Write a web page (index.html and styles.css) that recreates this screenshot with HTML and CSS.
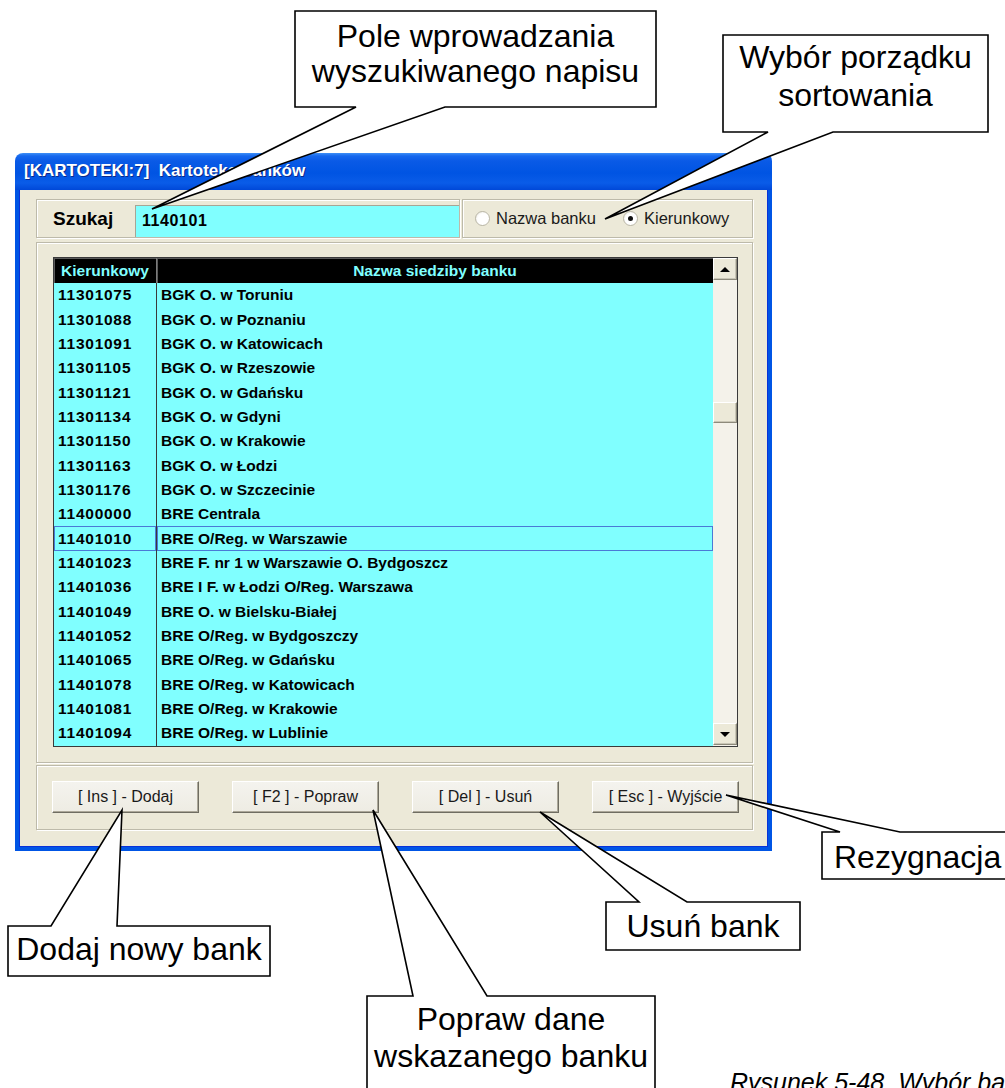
FILE: index.html
```html
<!DOCTYPE html>
<html lang="pl">
<head>
<meta charset="utf-8">
<title>Kartoteka banków</title>
<link rel="stylesheet" href="styles.css">
</head>
<body>
<div class="page">
  <div class="window">
    <div class="titlebar"><span class="title">[KARTOTEKI:7]&nbsp; Kartoteka banków</span></div>
    <div class="client">
      <div class="toprow">
        <div class="panel search">
          <span class="label">Szukaj</span>
          <div class="input">1140101</div>
        </div>
        <div class="panel sort">
          <div class="radio"><span class="rb"></span>Nazwa banku</div>
          <div class="radio"><span class="rb on"></span>Kierunkowy</div>
        </div>
      </div>
      <div class="panel main">
        <div class="grid">
          <div class="table">
            <div class="head">
              <div class="hc">Kierunkowy</div>
              <div class="hc">Nazwa siedziby banku</div>
            </div>
            <div class="row"><div class="c1">11301075</div><div class="c2">BGK O. w Toruniu</div></div>
            <div class="row"><div class="c1">11301088</div><div class="c2">BGK O. w Poznaniu</div></div>
            <div class="row"><div class="c1">11301091</div><div class="c2">BGK O. w Katowicach</div></div>
            <div class="row"><div class="c1">11301105</div><div class="c2">BGK O. w Rzeszowie</div></div>
            <div class="row"><div class="c1">11301121</div><div class="c2">BGK O. w Gdańsku</div></div>
            <div class="row"><div class="c1">11301134</div><div class="c2">BGK O. w Gdyni</div></div>
            <div class="row"><div class="c1">11301150</div><div class="c2">BGK O. w Krakowie</div></div>
            <div class="row"><div class="c1">11301163</div><div class="c2">BGK O. w Łodzi</div></div>
            <div class="row"><div class="c1">11301176</div><div class="c2">BGK O. w Szczecinie</div></div>
            <div class="row"><div class="c1">11400000</div><div class="c2">BRE Centrala</div></div>
            <div class="row sel"><div class="c1">11401010</div><div class="c2">BRE O/Reg. w Warszawie</div></div>
            <div class="row"><div class="c1">11401023</div><div class="c2">BRE F. nr 1 w Warszawie O. Bydgoszcz</div></div>
            <div class="row"><div class="c1">11401036</div><div class="c2">BRE I F. w Łodzi O/Reg. Warszawa</div></div>
            <div class="row"><div class="c1">11401049</div><div class="c2">BRE O. w Bielsku-Białej</div></div>
            <div class="row"><div class="c1">11401052</div><div class="c2">BRE O/Reg. w Bydgoszczy</div></div>
            <div class="row"><div class="c1">11401065</div><div class="c2">BRE O/Reg. w Gdańsku</div></div>
            <div class="row"><div class="c1">11401078</div><div class="c2">BRE O/Reg. w Katowicach</div></div>
            <div class="row"><div class="c1">11401081</div><div class="c2">BRE O/Reg. w Krakowie</div></div>
            <div class="row"><div class="c1">11401094</div><div class="c2">BRE O/Reg. w Lublinie</div></div>
          </div>
          <div class="scrollbar">
            <div class="sbtn"><span class="arr up"></span></div>
            <div class="thumb"></div>
            <div class="sbtn bottom"><span class="arr down"></span></div>
          </div>
        </div>
      </div>
      <div class="panel buttons">
        <div class="btn">[ Ins ] - Dodaj</div>
        <div class="btn">[ F2 ] - Popraw</div>
        <div class="btn">[ Del ] - Usuń</div>
        <div class="btn">[ Esc ] - Wyjście</div>
      </div>
    </div>
  </div>

  <svg class="overlay" width="1005" height="1088" viewBox="0 0 1005 1088">
    <g fill="#fff" stroke="#000" stroke-width="1.6" stroke-linejoin="miter">
      <polygon points="295,11 656,11 656,107 445,107 152,209 356,107 295,107"/>
      <polygon points="723,35 988,35 988,132 833,132 605,219 768,132 723,132"/>
      <polygon points="8,926 51,926 122,810 117,926 270,926 270,976 8,976"/>
      <polygon points="606,902 639,902 540,812 687,902 800,902 800,950 606,950"/>
      <polygon points="367,996 413,996 373,810 487,996 655,996 655,1100 367,1100"/>
      <polygon points="822,832 840,832 726,795 900,832 1012,832 1012,879 822,879"/>
    </g>
  </svg>

  <div class="callout c-pole">Pole wprowadzania<br>wyszukiwanego napisu</div>
  <div class="callout c-sort">Wybór porządku<br>sortowania</div>
  <div class="callout c-dodaj">Dodaj nowy bank</div>
  <div class="callout c-usun">Usuń bank</div>
  <div class="callout c-popraw">Popraw dane<br>wskazanego banku</div>
  <div class="callout c-rez">Rezygnacja</div>
  <div class="caption">Rysunek 5-48. Wybór banku</div>
</div>
</body>
</html>
```

FILE: styles.css
```css
html, body {
  margin: 0;
  padding: 0;
}
body {
  width: 1005px;
  height: 1088px;
  overflow: hidden;
  background: #fff;
  font-family: "Liberation Sans", Arial, sans-serif;
  color: #000;
}
.page {
  position: relative;
  width: 1005px;
  height: 1088px;
  padding: 153px 0 0 15px;
  box-sizing: border-box;
  overflow: hidden;
}

/* ---------- window ---------- */
.window {
  width: 757px;
}
.titlebar {
  height: 37px;
  box-sizing: border-box;
  border-radius: 8px 8px 0 0;
  background: linear-gradient(180deg, #3e8ff6 0px, #1668ee 3px, #0a5ae6 8px, #0054e3 20px, #0a5ce8 30px, #0048d8 37px);
  display: flex;
  align-items: center;
  padding: 0 0 2px 9px;
}
.title {
  color: #fff;
  font-weight: bold;
  font-size: 17px;
  text-shadow: 1px 1px 0 #0a2a8c;
}
.client {
  background: #ece9d8;
  border: 4px solid #0055e5;
  border-top: 0;
  padding: 9px 15px 19px 17px;
  height: 661px;
  box-sizing: border-box;
  box-shadow: inset 1px 0 0 #0831d9, inset -1px 0 0 #0831d9, inset 0 -1px 0 #0831d9;
}

.panel {
  border: 1px solid #bdbaaa;
  box-shadow: inset 1px 1px 0 #fff, 1px 1px 0 #fff;
  box-sizing: border-box;
}

/* ---------- top row ---------- */
.toprow {
  display: flex;
  gap: 2px;
  height: 39px;
}
.search {
  width: 424px;
  display: flex;
  align-items: flex-end;
  padding: 0 0 0 16px;
}
.search .label {
  font-weight: bold;
  font-size: 19px;
  align-self: center;
  width: 82px;
}
.input {
  margin-left: auto;
  width: 324px;
  height: 32px;
  box-sizing: border-box;
  background: #80ffff;
  border-top: 1px solid #a7a595;
  border-left: 1px solid #a7a595;
  font-weight: bold;
  font-size: 16px;
  line-height: 30px;
  padding-left: 6px;
  letter-spacing: 0.6px;
}
.sort {
  flex: 1;
  display: flex;
  align-items: center;
  padding-left: 12px;
  gap: 27px;
}
.radio {
  display: flex;
  align-items: center;
  gap: 6px;
  font-size: 16.5px;
  color: #1a1a1a;
}
.rb {
  width: 15px;
  height: 15px;
  box-sizing: border-box;
  border-radius: 50%;
  border: 1px solid #b9b6a6;
  background: radial-gradient(circle at 60% 60%, #fff 55%, #e4e2d8 100%);
  display: flex;
  align-items: center;
  justify-content: center;
}
.rb.on::after {
  content: "";
  width: 5px;
  height: 5px;
  border-radius: 50%;
  background: #111;
}

/* ---------- main grid panel ---------- */
.main {
  margin-top: 4px;
  height: 521px;
  padding: 14px 14px 15px 16px;
}
.grid {
  height: 490px;
  box-sizing: border-box;
  border: 1px solid #3a3a3a;
  display: flex;
  background: #80ffff;
}
.table {
  flex: 1;
  overflow: hidden;
}
.head {
  display: grid;
  grid-template-columns: 103px 1fr;
  height: 25px;
  background: #000;
  color: #80ffff;
  font-weight: bold;
  font-size: 15.5px;
}
.hc {
  display: flex;
  align-items: center;
  justify-content: center;
  box-shadow: inset 1px 1px 0 #5a5a5a;
}
.hc:first-child {
  border-right: 1px solid #7c7c7c;
}
.row {
  display: grid;
  grid-template-columns: 103px 1fr;
  height: 24.35px;
  font-weight: bold;
  font-size: 15.5px;
}
.c1, .c2 {
  display: flex;
  align-items: center;
  padding-left: 4px;
  white-space: nowrap;
}
.c1 {
  border-right: 1px solid #3a3a3a;
  letter-spacing: 0.75px;
}
.row.sel .c1,
.row.sel .c2 {
  box-shadow: inset 0 0 0 1px #4a7ad6;
}

.scrollbar {
  width: 24px;
  background: #f4f2ea;
  display: flex;
  flex-direction: column;
}
.sbtn {
  height: 22px;
  box-sizing: border-box;
  background: #ece9d8;
  border: 1px solid;
  border-color: #fff #8d8a7b #8d8a7b #fff;
  box-shadow: inset -1px -1px 0 #c9c6b6;
  display: flex;
  align-items: center;
  justify-content: center;
}
.sbtn.bottom {
  margin-top: auto;
  margin-bottom: 1px;
}
.arr {
  width: 0;
  height: 0;
  border-left: 5px solid transparent;
  border-right: 5px solid transparent;
}
.arr.up { border-bottom: 5px solid #000; }
.arr.down { border-top: 5px solid #000; }
.thumb {
  margin-top: 122px;
  height: 21px;
  box-sizing: border-box;
  background: #ece9d8;
  border: 1px solid;
  border-color: #fff #8d8a7b #8d8a7b #fff;
  box-shadow: inset -1px -1px 0 #c9c6b6;
}

/* ---------- buttons panel ---------- */
.buttons {
  margin-top: 2px;
  height: 65px;
  display: flex;
  align-items: center;
  gap: 33px;
  padding: 0 0 1px 15px;
}
.btn {
  width: 147px;
  height: 32px;
  box-sizing: border-box;
  background: linear-gradient(180deg, #f4f3ee 0%, #eeece3 100%);
  border: 1px solid;
  border-color: #fff #6f6d62 #6f6d62 #fff;
  box-shadow: inset -1px -1px 0 #aca899;
  display: flex;
  align-items: center;
  justify-content: center;
  font-size: 16px;
  color: #1a1a1a;
  padding-bottom: 1px;
}

/* ---------- annotations ---------- */
.overlay {
  position: absolute;
  left: 0;
  top: 0;
  pointer-events: none;
}
.callout {
  position: absolute;
  font-size: 32px;
  text-align: center;
  color: #000;
  white-space: nowrap;
}
.c-pole { left: 295px; top: 19px; width: 361px; line-height: 35px; }
.c-sort { left: 723px; top: 38px; width: 265px; line-height: 38px; }
.c-dodaj { left: 8px; top: 932px; width: 262px; line-height: 35px; }
.c-usun { left: 606px; top: 909px; width: 194px; line-height: 35px; }
.c-popraw { left: 367px; top: 1001px; width: 288px; line-height: 37px; }
.c-rez { left: 834px; top: 840px; line-height: 35px; }
.caption {
  position: absolute;
  left: 730px;
  top: 1069px;
  font-size: 25px;
  line-height: 26px;
  font-style: italic;
  white-space: nowrap;
}
```
